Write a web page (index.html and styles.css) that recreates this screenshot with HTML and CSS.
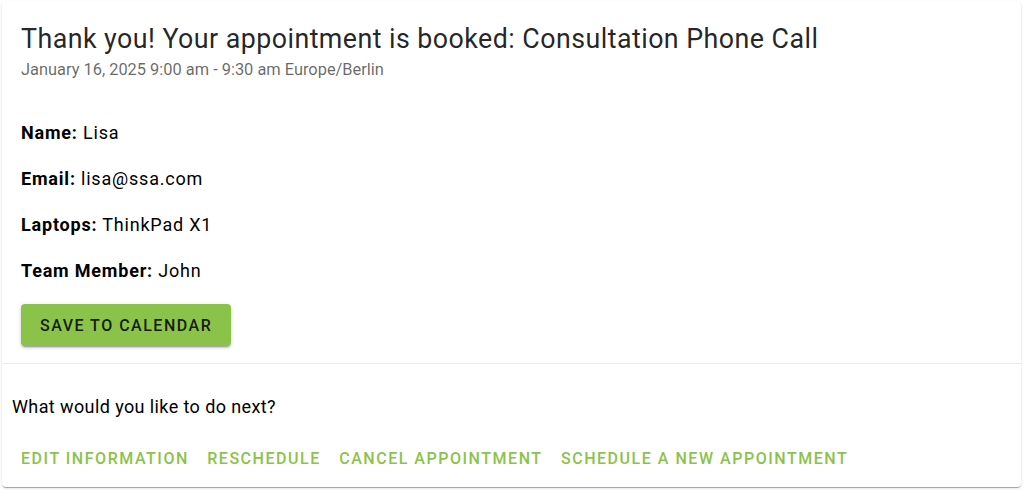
FILE: index.html
```html
<!DOCTYPE html>
<html>
<head>
<meta charset="utf-8">
<link rel="stylesheet" href="styles.css">
</head>
<body>
<div class="card">
  <div class="card-main">
    <h1 class="title">Thank you! Your appointment is booked: Consultation Phone Call</h1>
    <div class="subtitle">January 16, 2025 9:00 am - 9:30 am Europe/Berlin</div>
    <div class="fields">
      <p class="field"><strong>Name:</strong> Lisa</p>
      <p class="field"><strong>Email:</strong> lisa@ssa.com</p>
      <p class="field"><strong>Laptops:</strong> ThinkPad X1</p>
      <p class="field"><strong>Team Member:</strong> John</p>
    </div>
    <button class="btn-save">Save to Calendar</button>
  </div>
  <div class="divider"></div>
  <div class="card-next">
    <div class="next-q">What would you like to do next?</div>
    <div class="actions">
      <a class="action">Edit Information</a>
      <a class="action">Reschedule</a>
      <a class="action">Cancel Appointment</a>
      <a class="action">Schedule a New Appointment</a>
    </div>
  </div>
</div>
</body>
</html>
```
FILE: styles.css
```css
* { box-sizing: border-box; }
html, body { margin: 0; padding: 0; background: #fff; }
body {
  font-family: Roboto, "Liberation Sans", sans-serif;
  color: rgba(0,0,0,0.87);
  padding: 2px 3px 3px 2px;
}
.card {
  background: #fff;
  border-radius: 4px;
  box-shadow: 0 2px 1px -1px rgba(0,0,0,0.2), 0 1px 1px 0 rgba(0,0,0,0.14), 0 1px 3px 0 rgba(0,0,0,0.12);
  height: 485px;
}
.card-main {
  padding: 19px 19px 17px 19px;
}
.title {
  margin: 0;
  font-size: 26.8px;
  font-weight: 400;
  line-height: 36px;
  letter-spacing: 0.45px;
  color: rgba(0,0,0,0.87);
}
.subtitle {
  font-size: 16.4px;
  line-height: 20px;
  color: rgba(0,0,0,0.6);
  margin-top: 3px;
}
.fields {
  margin-top: 39.5px;
}
.field {
  margin: 0 0 20.2px 0;
  font-size: 18px;
  line-height: 26px;
  letter-spacing: 0.8px;
  color: #000;
}
.field strong { font-weight: 700; }
.btn-save {
  display: block;
  height: 42px;
  padding: 0 19px;
  background: #8bc34a;
  border: none;
  border-radius: 4px;
  font-family: Roboto, "Liberation Sans", sans-serif;
  font-size: 16px;
  font-weight: 500;
  letter-spacing: 1.5px;
  text-transform: uppercase;
  color: rgba(0,0,0,0.87);
  box-shadow: 0 3px 1px -2px rgba(0,0,0,0.2), 0 2px 2px 0 rgba(0,0,0,0.14), 0 1px 5px 0 rgba(0,0,0,0.12);
}
.divider {
  height: 1px;
  background: rgba(0,0,0,0.08);
}
.card-next {
  padding: 29.4px 10px 0 10px;
}
.next-q {
  font-size: 18px;
  line-height: 26px;
  letter-spacing: 0.4px;
  color: #000;
}
.actions {
  display: flex;
  gap: 18.4px;
  padding: 29.5px 9px 0 9px;
}
.action {
  font-size: 16px;
  font-weight: 500;
  letter-spacing: 1.53px;
  text-transform: uppercase;
  color: #8bc34a;
  line-height: 20px;
}
```
